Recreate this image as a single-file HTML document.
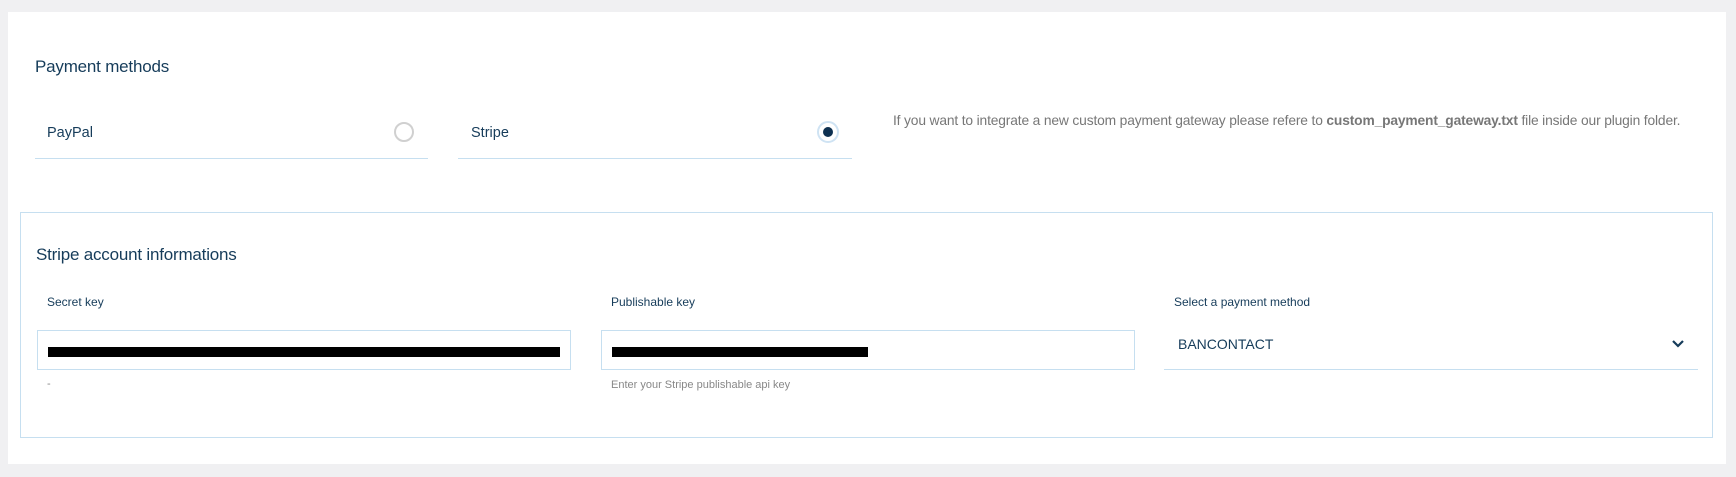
<!DOCTYPE html>
<html><head><style>
body{margin:0;width:1736px;height:477px;background:#f0f0f2;font-family:"Liberation Sans",sans-serif;position:relative;overflow:hidden;color:#163c5a}
.a{position:absolute;white-space:nowrap}
#panel{position:absolute;left:8px;top:12px;width:1718px;height:452px;background:#fff}
.line{position:absolute;height:1px;background:#c6dff0}
.radio{position:absolute;width:20px;height:20px;border-radius:50%;border:2px solid #d0d0d0;box-sizing:border-box}
.inp{position:absolute;border:1px solid #c6dff0;box-sizing:border-box;height:40px}
.bar{position:absolute;height:10px;background:#000}
</style></head><body>
<div id="panel"></div>
<div class="a" style="left:35px;top:57px;font-size:17px;letter-spacing:-0.2px">Payment methods</div>
<div class="a" style="left:47px;top:125px;font-size:14.5px">PayPal</div>
<div class="radio" style="left:394px;top:122px"></div>
<div class="line" style="left:35px;top:158px;width:393px"></div>
<div class="a" style="left:471px;top:125px;font-size:14.5px">Stripe</div>
<div class="radio" style="left:817px;top:121px;width:22px;height:22px;border-color:#cfe3f3"></div>
<div style="position:absolute;left:823px;top:127px;width:10px;height:10px;border-radius:50%;background:#0d3050"></div>
<div class="line" style="left:458px;top:158px;width:394px"></div>
<div class="a" style="left:893px;top:113px;font-size:13.8px;color:#777;letter-spacing:-0.15px">If you want to integrate a new custom payment gateway please refere to <b>custom_payment_gateway.txt</b> file inside our plugin folder.</div>
<div style="position:absolute;left:20px;top:212px;width:1693px;height:226px;border:1px solid #c6dff0;box-sizing:border-box"></div>
<div class="a" style="left:36px;top:245px;font-size:17px;letter-spacing:-0.2px">Stripe account informations</div>
<div class="a" style="left:47px;top:295px;font-size:12px">Secret key</div>
<div class="a" style="left:611px;top:295px;font-size:12px">Publishable key</div>
<div class="a" style="left:1174px;top:295px;font-size:12px">Select a payment method</div>
<div class="inp" style="left:37px;top:330px;width:534px"></div>
<div class="bar" style="left:48px;top:347px;width:512px"></div>
<div class="inp" style="left:601px;top:330px;width:534px"></div>
<div class="bar" style="left:612px;top:347px;width:256px"></div>
<div class="a" style="left:1178px;top:336px;font-size:14px">BANCONTACT</div>
<svg class="a" style="left:1671px;top:339px" width="14" height="10" viewBox="0 0 14 10"><path d="M2 2l5 5 5-5" stroke="#163c5a" stroke-width="2.2" fill="none"/></svg>
<div class="line" style="left:1164px;top:369px;width:534px"></div>
<div class="a" style="left:47px;top:378px;font-size:11px;color:#888">-</div>
<div class="a" style="left:611px;top:379px;font-size:11px;color:#888">Enter your Stripe publishable api key</div>
</body></html>
